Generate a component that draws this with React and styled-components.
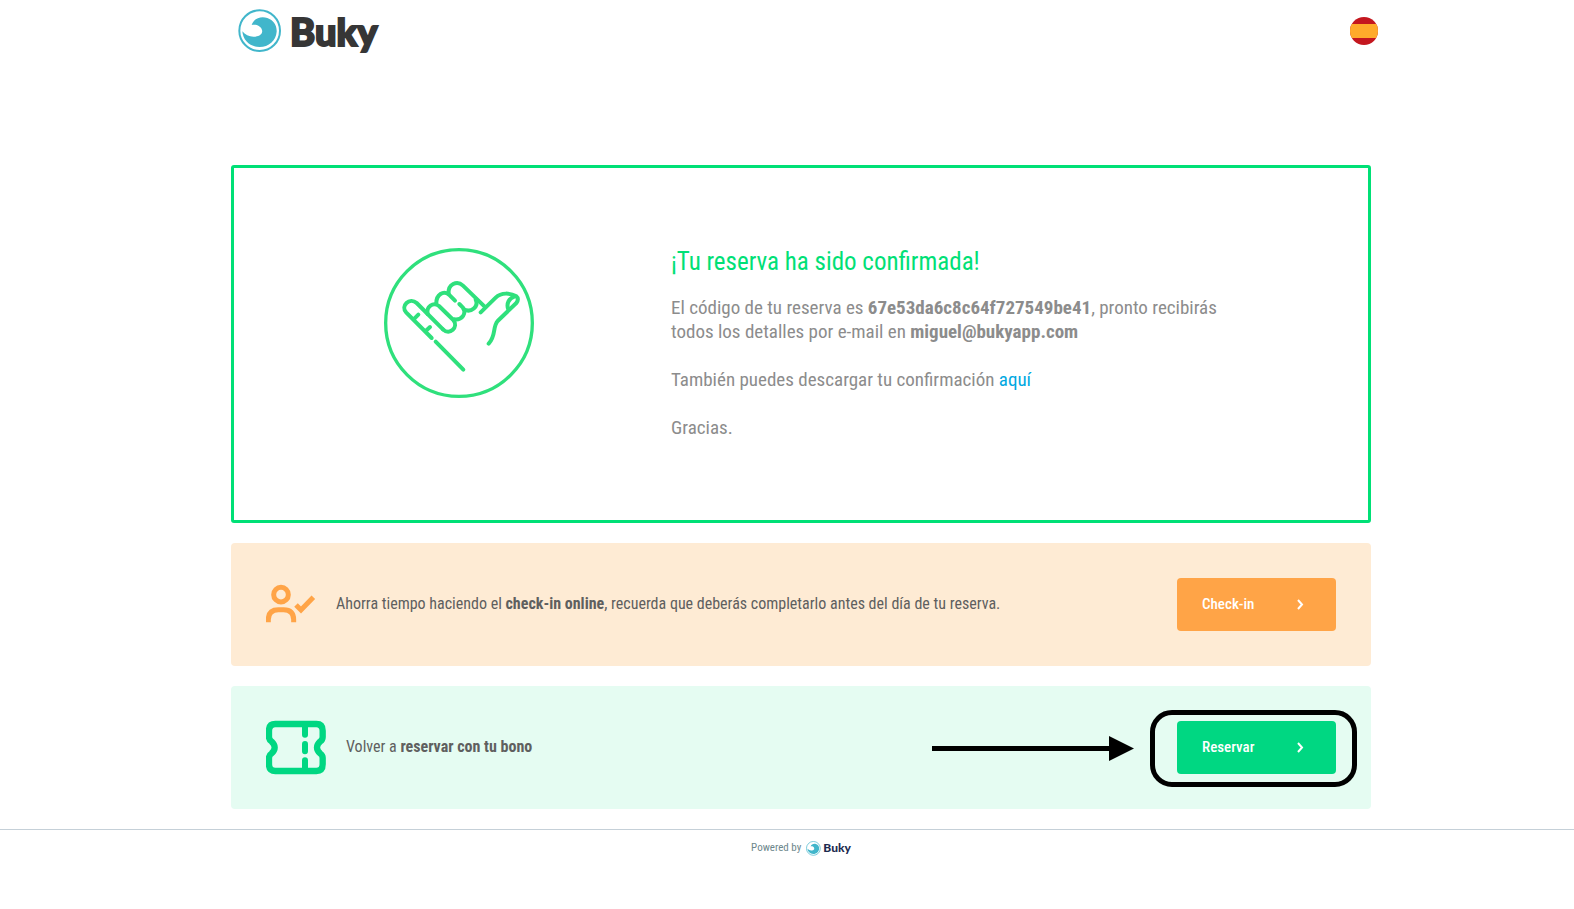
import React from 'react';
import styled, { createGlobalStyle } from 'styled-components';

const GlobalStyle = createGlobalStyle`
  * {
    box-sizing: border-box;
  }

  body {
    margin: 0;
    background: #fff;
    font-family: 'Roboto Condensed', Roboto, 'Liberation Sans', sans-serif;
  }
`;

const Header = styled.header`
  padding: 7px 0 0 42px;
`;

const HeaderInner = styled.div`
  max-width: 1140px;
  height: 47px;
  margin: 0 auto;
  display: flex;
  align-items: center;
  justify-content: space-between;
`;

const LogoLink = styled.a`
  display: flex;
  align-items: center;
  gap: ${(props) => (props.$small ? '2px' : '8px')};
  color: ${(props) => (props.$small ? '#1d2b4f' : '#363636')};
  font-family: Lato, 'Open Sans', sans-serif;
  font-size: ${(props) => (props.$small ? '12px' : '38px')};
  font-weight: 900;
  line-height: 1;
  text-decoration: none;
  -webkit-text-stroke: ${(props) => (props.$small ? '0' : '2px #363636')};

  svg {
    width: ${(props) => (props.$small ? '15px' : '44px')};
    height: ${(props) => (props.$small ? '15px' : '44px')};
  }
`;

const LanguageButton = styled.button`
  width: 28px;
  height: 28px;
  padding: 0;
  border: 0;
  border-radius: 50%;
  background: none;
  cursor: pointer;

  svg {
    display: block;
  }
`;

const Main = styled.main`
  padding: 111px 0 20px 28px;
`;

const Content = styled.div`
  max-width: 1140px;
  margin: 0 auto;
  display: flex;
  flex-direction: column;
  gap: 20px;
`;

const Confirmation = styled.section`
  display: grid;
  grid-template-columns: 437px 1fr;
  align-items: start;
  padding: 80px 135px 80px 0;
  border: 3px solid #00e076;
  border-radius: 3px;
`;

const HandWrapper = styled.div`
  display: flex;
  justify-content: center;
  padding-left: 13px;
`;

const Message = styled.div`
  color: #8c8c8c;
  font-size: 19px;
  line-height: 24px;

  p {
    margin: 0 0 24px;
  }

  p:last-child {
    margin-bottom: 0;
  }

  a {
    color: #00a8e1;
    text-decoration: none;
  }
`;

const Title = styled.h1`
  margin: 0 0 20px;
  color: #00e076;
  font-size: 25px;
  font-weight: 400;
  line-height: 28px;
`;

const Banner = styled.section`
  position: relative;
  display: flex;
  align-items: center;
  gap: 20px;
  padding: 35px;
  border-radius: 4px;
  background: ${(props) => props.$background};
  color: #5f5f5f;
  font-size: 16px;
  line-height: 24px;

  p {
    flex: 1;
    margin: 0;
    padding-bottom: 2px;
  }

  > svg {
    flex: none;
    margin: -10px 0;
  }
`;

const ActionButton = styled.button`
  display: flex;
  align-items: center;
  justify-content: space-between;
  width: 159px;
  height: 53px;
  padding: 0 30px 1px 25px;
  border: 0;
  border-radius: 4px;
  background: ${(props) => props.$color};
  color: #fff;
  font-family: inherit;
  font-size: 15px;
  font-weight: 500;
  cursor: pointer;
`;

const Highlight = styled.div`
  position: absolute;
  top: 24px;
  right: 14px;
  width: 207px;
  height: 77px;
  border: 5px solid #000;
  border-radius: 22px;
  pointer-events: none;
`;

const Pointer = styled.svg`
  position: absolute;
  top: 60px;
  right: 237px;
  pointer-events: none;
`;

const Footer = styled.footer`
  display: flex;
  align-items: center;
  justify-content: center;
  gap: 5px;
  padding: 10px 0 10px 28px;
  border-top: 1px solid #c5d0d8;
  color: #6d878c;
  font-size: 11px;
  line-height: 16px;
`;

function WaveIcon() {
  return (
    <svg viewBox="39 25 132 132" aria-hidden="true">
      <circle cx="104" cy="90" r="61" fill="none" stroke="#41b6cb" strokeWidth="6" />
      <path
        d="M80 73C86 53 108 45 127 52C146 59 156 74 155 93C153 120 131 139 104 139C75 139 54 119 52 92C61 104 76 110 91 108C106 107 114 98 111 88C108 76 94 70 80 73Z"
        fill="#41b6cb"
      />
    </svg>
  );
}

function Logo({ small }) {
  return (
    <LogoLink href="#" $small={small}>
      <WaveIcon />
      <span>Buky</span>
    </LogoLink>
  );
}

function SpainFlag() {
  return (
    <svg width="28" height="28" viewBox="0 0 28 28" aria-hidden="true">
      <clipPath id="flag">
        <circle cx="14" cy="14" r="14" />
      </clipPath>
      <g clipPath="url(#flag)">
        <rect width="28" height="28" fill="#c4171f" />
        <rect y="7" width="28" height="14" fill="#ffab2b" />
      </g>
    </svg>
  );
}

function ShakaIcon() {
  return (
    <svg width="150" height="150" viewBox="27 23 450 450" fill="none" stroke="#2fe07c" strokeWidth="12" strokeLinecap="round" strokeLinejoin="round" aria-hidden="true">
      <circle cx="252" cy="248" r="220" strokeWidth="10" />
      {/* little finger */}
      <path d="M170 293L94 217C75 197 104 169 125 188L204 267" />
      <path d="M118 235L130 223M153 271L165 260" />
      {/* folded fingers */}
      <path d="M158 221C153 199 174 184 192 197L235 239C252 260 224 287 204 267" />
      <path d="M184 188C184 163 205 149 222 163L240 181" />
      <path d="M253 191L263 201C276 218 262 240 238 237" />
      <path d="M221 160C218 132 246 119 264 136L329 199" />
      <path d="M302 178C312 198 289 219 266 207" />
      {/* thumb and palm */}
      <path d="M317 216L362 172C379 155 407 158 424 168C430 173 429 181 424 188L368 242C352 260 364 286 341 310" />
      <path d="M418 169C402 174 393 190 400 207" />
      <path d="M182 304L265 388" />
    </svg>
  );
}

function UserCheckIcon() {
  return (
    <svg width="50" height="50" viewBox="123 211 150 150" fill="none" stroke="#ffa447" strokeWidth="15" aria-hidden="true">
      <circle cx="168" cy="255" r="22" />
      <path d="M130 338V330Q130 300 160 300H176Q206 300 206 330V338" />
      <path d="M213 286L228 301L265 263" />
    </svg>
  );
}

function TicketIcon() {
  return (
    <svg width="60" height="60" viewBox="122 113 180 180" fill="none" stroke="#00d782" strokeWidth="19" strokeLinejoin="round" aria-hidden="true">
      <path d="M150 131H273Q292 131 292 151V170Q292 179 284 184Q266 201 284 219Q292 224 292 233V252Q292 272 273 272H150Q131 272 131 252V233Q131 224 139 219Q157 201 139 184Q131 179 131 170V151Q131 131 150 131Z" />
      <path d="M239 133V163M239 191V213M239 240V270" strokeWidth="18" strokeLinecap="round" />
    </svg>
  );
}

function ChevronIcon() {
  return (
    <svg width="10" height="12" viewBox="0 0 10 12" fill="none" stroke="#fff" strokeWidth="2" aria-hidden="true">
      <path d="M2 2L6 6.500L2 11" />
    </svg>
  );
}

export default function App() {
  return (
    <>
      <GlobalStyle />
      <Header>
        <HeaderInner>
          <Logo />
          <LanguageButton type="button" aria-label="Español">
            <SpainFlag />
          </LanguageButton>
        </HeaderInner>
      </Header>
      <Main>
        <Content>
          <Confirmation>
            <HandWrapper>
              <ShakaIcon />
            </HandWrapper>
            <Message>
              <Title>¡Tu reserva ha sido confirmada!</Title>
              <p>
                El código de tu reserva es <strong>67e53da6c8c64f727549be41</strong>, pronto recibirás
                <br />
                todos los detalles por e-mail en <strong>miguel@bukyapp.com</strong>
              </p>
              <p>
                También puedes descargar tu confirmación <a href="#">aquí</a>
              </p>
              <p>Gracias.</p>
            </Message>
          </Confirmation>
          <Banner $background="#feebd4">
            <UserCheckIcon />
            <p>
              Ahorra tiempo haciendo el <strong>check-in online</strong>, recuerda que deberás completarlo antes del día de tu reserva.
            </p>
            <ActionButton type="button" $color="#ffa447">
              Check-in
              <ChevronIcon />
            </ActionButton>
          </Banner>
          <Banner $background="#e5fcf2">
            <TicketIcon />
            <p>
              Volver a <strong>reservar con tu bono</strong>
            </p>
            <ActionButton type="button" $color="#00d782">
              Reservar
              <ChevronIcon />
            </ActionButton>
            <Pointer width="202" height="26" viewBox="0 0 202 26" aria-hidden="true">
              <path d="M0 12.500H178" stroke="#000" strokeWidth="5" />
              <path d="M177 0L202 12.500L177 25Z" />
            </Pointer>
            <Highlight />
          </Banner>
        </Content>
      </Main>
      <Footer>
        <span>Powered by</span>
        <Logo small />
      </Footer>
    </>
  );
}
